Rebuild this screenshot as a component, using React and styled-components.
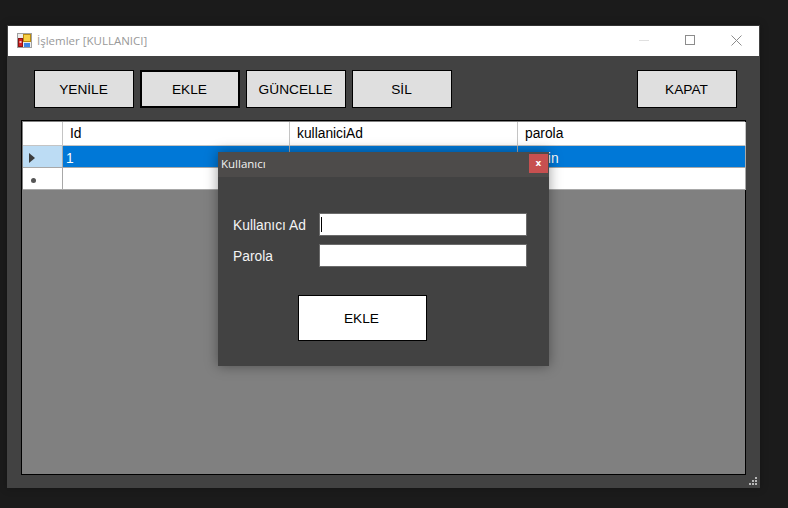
import React from 'react';
import styled, { createGlobalStyle } from 'styled-components';

const GlobalStyle = createGlobalStyle`
    html, body {
        margin: 0;
        padding: 0;
        height: 100%;
        background: #1b1b1b;
        overflow: hidden;
    }
    * {
        box-sizing: border-box;
    }
`;

const Page = styled.div`
    width: 788px;
    height: 508px;
    padding: 25px 0 0 7px;
    background: #1b1b1b;
    font-family: "Liberation Sans", Arial, sans-serif;
`;

const Window = styled.div`
    position: relative;
    width: 753px;
    height: 463px;
    display: flex;
    flex-direction: column;
    background: #424242;
    border: 1px solid #424242;
    border-top-color: #333;
    box-shadow: 0 0 8px rgba(0, 0, 0, 0.25);
`;

const TitleBar = styled.div`
    height: 30px;
    flex: none;
    display: flex;
    align-items: center;
    padding: 0 0 2px 9px;
    background: #fff;
`;

const AppIcon = styled.svg`
    width: 15px;
    height: 15px;
    flex: none;
`;

const TitleText = styled.span`
    margin-left: 5px;
    font-family: "Open Sans", "Noto Sans", sans-serif;
    font-size: 11.5px;
    color: #999;
`;

const WindowControls = styled.div`
    margin-left: auto;
    display: flex;
    align-items: center;
`;

const ControlButton = styled.div`
    width: 46px;
    height: 28px;
    display: flex;
    align-items: center;
    justify-content: center;
`;

const Content = styled.div`
    flex: 1;
    padding: 14px 13px 12px 13px;
    display: flex;
    flex-direction: column;
`;

const Toolbar = styled.div`
    display: flex;
    gap: 6px;
    padding-left: 13px;
    padding-right: 9px;
`;

const ToolButton = styled.div`
    width: 100px;
    height: 38px;
    display: flex;
    align-items: center;
    justify-content: center;
    padding-right: 1px;
    background: #dfdfdf;
    border: ${p => (p.$active ? 2 : 1)}px solid #000;
    color: #000;
    font-size: 13.7px;
    margin-left: ${p => (p.$pushRight ? 'auto' : 0)};
`;

const Grid = styled.div`
    margin-top: 12px;
    flex: 1;
    background: #808080;
    border: 1px solid #000;
    padding: 1px 0 0 1px;
`;

const GridRow = styled.div`
    display: grid;
    grid-template-columns: 40px 227px 228px 228px;
    height: ${p => p.$h}px;
`;

const HeaderCell = styled.div`
    display: flex;
    align-items: center;
    padding-left: 7px;
    background: #fff;
    border-right: 1px solid #c4c4c4;
    border-bottom: 1px solid #c4c4c4;
    color: #000;
    font-size: 13.8px;
`;

const RowHeader = styled.div`
    display: flex;
    align-items: center;
    padding: ${p => (p.$dot ? '4px 0 0 8px' : '2px 0 0 6px')};
    background: ${p => (p.$selected ? '#bcdcf4' : '#fff')};
    border-right: 1px solid #a8a8a8;
    border-bottom: 1px solid #a8a8a8;
`;

const Cell = styled.div`
    display: flex;
    align-items: center;
    padding: 4px 0 0 3px;
    background: ${p => (p.$selected ? '#0078d7' : '#fff')};
    border-right: 1px solid #a8a8a8;
    border-bottom: 1px solid #a8a8a8;
    color: ${p => (p.$selected ? '#fff' : '#000')};
    font-size: 13.8px;
`;

const Arrow = styled.span`
    width: 0;
    height: 0;
    border-left: 6px solid #3c3c3c;
    border-top: 5px solid transparent;
    border-bottom: 5px solid transparent;
`;

const Star = styled.span`
    width: 5px;
    height: 5px;
    border-radius: 50%;
    background: #555;
`;

const Dialog = styled.div`
    position: absolute;
    left: 210px;
    top: 126px;
    width: 331px;
    height: 214px;
    display: flex;
    flex-direction: column;
    background: #424242;
    box-shadow: 0 0 12px rgba(0, 0, 0, 0.4);
`;

const DialogTitleBar = styled.div`
    height: 25px;
    flex: none;
    display: flex;
    align-items: center;
    padding: 0 1px 3px 3px;
    background: #4d4b4a;
`;

const DialogTitle = styled.span`
    font-family: "Open Sans", "Noto Sans", sans-serif;
    font-size: 11.5px;
    color: #f2f2f2;
`;

const CloseButton = styled.div`
    margin-left: auto;
    width: 19px;
    height: 19px;
    display: flex;
    align-items: center;
    justify-content: center;
    background: #c75050;
    color: #fff;
    font-family: "DejaVu Sans", sans-serif;
    font-size: 9px;
    font-weight: bold;
`;

const Form = styled.div`
    padding: 36px 22px 0 15px;
    display: flex;
    flex-direction: column;
    gap: 8px;
`;

const FormRow = styled.div`
    display: grid;
    grid-template-columns: 86px 208px;
    align-items: center;
`;

const FormLabel = styled.span`
    padding-top: 2px;
    color: #f4f4f4;
    font-size: 13.8px;
`;

const TextBox = styled.div`
    height: 23px;
    background: #fff;
    border: 1px solid #6b6b6b;
    padding: 3px 0 3px 1px;
`;

const Caret = styled.div`
    width: 1px;
    height: 15px;
    background: #000;
`;

const SubmitButton = styled.div`
    margin: 28px 0 0 80px;
    width: 129px;
    height: 46px;
    display: flex;
    align-items: center;
    justify-content: center;
    padding-right: 2px;
    background: #fff;
    border: 1px solid #000;
    color: #000;
    font-size: 13.7px;
`;

const ResizeGrip = styled.svg`
    position: absolute;
    right: 2px;
    bottom: 2px;
    width: 8px;
    height: 8px;
`;

const columns = ['Id', 'kullaniciAd', 'parola'];

const App = () => (
    <Page>
        <GlobalStyle />
        <Window>
            <TitleBar>
                <AppIcon viewBox="0 0 15 15">
                    <rect x="0.5" y="0.5" width="14" height="14" fill="#ececec" stroke="#a0a0a0" />
                    <rect x="6.5" y="1.5" width="7" height="7" fill="#f6cf45" stroke="#b98a10" />
                    <rect x="1.5" y="5.5" width="4" height="8" fill="#d42020" stroke="#8a1414" />
                    <rect x="2.5" y="8" width="2" height="2" fill="#f4c0c0" />
                    <rect x="7" y="10" width="6" height="4" fill="#3f86e4" />
                </AppIcon>
                <TitleText>İşlemler [KULLANICI]</TitleText>
                <WindowControls>
                    <ControlButton>
                        <svg width="10" height="10" viewBox="0 0 10 10">
                            <path d="M0 5.5H10" stroke="#e0e0e0" />
                        </svg>
                    </ControlButton>
                    <ControlButton>
                        <svg width="10" height="10" viewBox="0 0 10 10">
                            <rect x="0.5" y="0.5" width="9" height="9" fill="none" stroke="#8c8c8c" />
                        </svg>
                    </ControlButton>
                    <ControlButton>
                        <svg width="11" height="11" viewBox="0 0 11 11">
                            <path d="M0.5 0.5L10.5 10.5M10.5 0.5L0.5 10.5" stroke="#8c8c8c" />
                        </svg>
                    </ControlButton>
                </WindowControls>
            </TitleBar>
            <Content>
                <Toolbar>
                    <ToolButton>YENİLE</ToolButton>
                    <ToolButton $active>EKLE</ToolButton>
                    <ToolButton>GÜNCELLE</ToolButton>
                    <ToolButton>SİL</ToolButton>
                    <ToolButton $pushRight>KAPAT</ToolButton>
                </Toolbar>
                <Grid>
                    <GridRow $h={24}>
                        <HeaderCell />
                        {columns.map(c => <HeaderCell key={c}>{c}</HeaderCell>)}
                    </GridRow>
                    <GridRow $h={22}>
                        <RowHeader $selected><Arrow /></RowHeader>
                        <Cell $selected>1</Cell>
                        <Cell $selected>admin</Cell>
                        <Cell $selected>admin</Cell>
                    </GridRow>
                    <GridRow $h={22}>
                        <RowHeader $dot><Star /></RowHeader>
                        <Cell />
                        <Cell />
                        <Cell />
                    </GridRow>
                </Grid>
            </Content>
            <Dialog>
                <DialogTitleBar>
                    <DialogTitle>Kullanıcı</DialogTitle>
                    <CloseButton>x</CloseButton>
                </DialogTitleBar>
                <Form>
                    <FormRow>
                        <FormLabel>Kullanıcı Ad</FormLabel>
                        <TextBox><Caret /></TextBox>
                    </FormRow>
                    <FormRow>
                        <FormLabel>Parola</FormLabel>
                        <TextBox />
                    </FormRow>
                </Form>
                <SubmitButton>EKLE</SubmitButton>
            </Dialog>
            <ResizeGrip viewBox="0 0 8 8">
                <path d="M6 0h2v2H6zM3 3h2v2H3zM6 3h2v2H6zM0 6h2v2H0zM3 6h2v2H3zM6 6h2v2H6z" fill="#b8b8b8" />
            </ResizeGrip>
        </Window>
    </Page>
);

export default App;
